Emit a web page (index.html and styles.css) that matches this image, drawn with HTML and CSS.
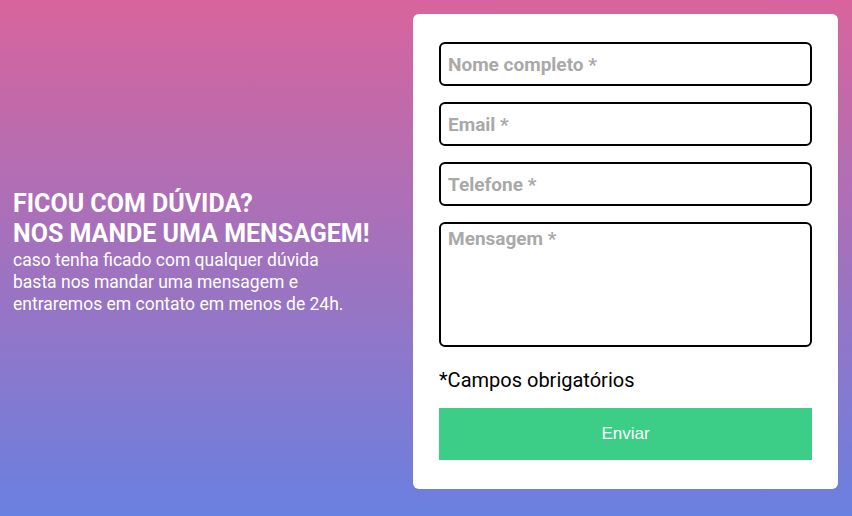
FILE: index.html
```html
<!DOCTYPE html>
<html lang="pt-BR">
<head>
<meta charset="utf-8">
<link rel="stylesheet" href="styles.css">
</head>
<body>
<main class="page">
  <section class="intro">
    <h1 class="intro-title">Ficou com dúvida?<br>Nos mande uma mensagem!</h1>
    <p class="intro-text">caso tenha ficado com qualquer dúvida<br>basta nos mandar uma mensagem e<br>entraremos em contato em menos de 24h.</p>
  </section>
  <form class="card">
    <input class="field" type="text" placeholder="Nome completo *">
    <input class="field" type="email" placeholder="Email *">
    <input class="field" type="tel" placeholder="Telefone *">
    <textarea class="field field-area" placeholder="Mensagem *"></textarea>
    <p class="note">*Campos obrigatórios</p>
    <button class="submit" type="button">Enviar</button>
  </form>
</main>
</body>
</html>
```
FILE: styles.css
```css
* { box-sizing: border-box; }
html, body { margin: 0; height: 100%; }
body {
  font-family: Roboto, "Liberation Sans", sans-serif;
  background: linear-gradient(to bottom, #d8649c, #6a80e0);
}
.page {
  height: 516px;
  display: flex;
  align-items: center;
  padding: 14px 14px 27px 13px;
  justify-content: space-between;
}
.intro { color: #fff; }
.intro-title {
  margin: 0;
  font-size: 25px;
  line-height: 30px;
  font-weight: 700;
  text-transform: uppercase;
}
.intro-text {
  margin: 0;
  font-size: 17.5px;
  line-height: 22px;
}
.card {
  width: 425px;
  height: 475px;
  background: #fff;
  border-radius: 6px;
  padding: 28px 26px 29px;
  display: flex;
  flex-direction: column;
}
.field {
  display: block;
  width: 100%;
  height: 44px;
  border: 2px solid #000;
  border-radius: 6px;
  padding: 0 7px;
  margin: 0 0 16px;
  font-family: Roboto, sans-serif;
  font-size: 19px;
  font-weight: 700;
  outline: none;
}
.field::placeholder { color: #a9a9a9; opacity: 1; }
.field-area {
  height: 125px;
  resize: none;
  padding-top: 3px;
  margin-bottom: 0;
}
.note {
  margin: 20px 0 0;
  font-size: 20px;
  line-height: 26px;
  color: #000;
}
.submit {
  margin-top: auto;
  height: 52px;
  width: 100%;
  border: none;
  background: #3ccd87;
  color: #fff;
  font-family: "Liberation Sans", Arial, sans-serif;
  font-size: 17px;
}
```
